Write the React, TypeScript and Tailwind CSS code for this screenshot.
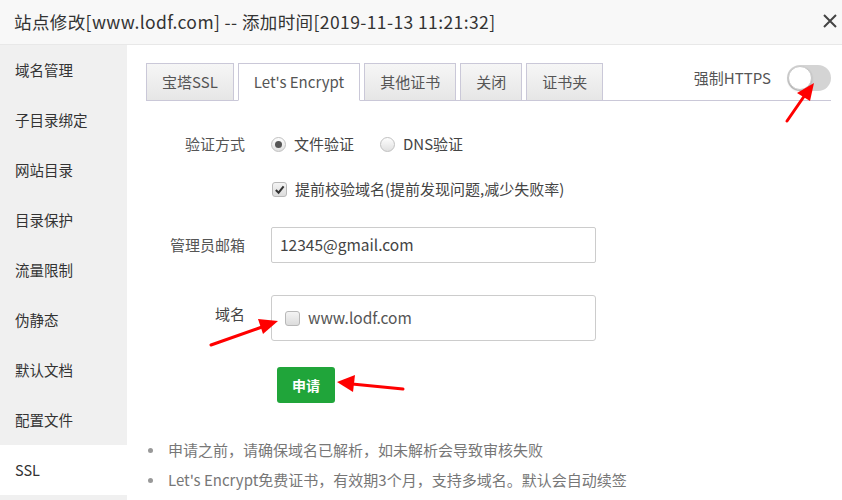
import React from "react";

const menu = [
  "域名管理",
  "子目录绑定",
  "网站目录",
  "目录保护",
  "流量限制",
  "伪静态",
  "默认文档",
  "配置文件",
  "SSL",
];

const tabs = ["宝塔SSL", "Let's Encrypt", "其他证书", "关闭", "证书夹"];

function Radio({ checked }: { checked?: boolean }) {
  return (
    <span className="flex h-[15px] w-[15px] items-center justify-center rounded-full border border-[#c0c0c0] bg-gradient-to-b from-[#fdfdfd] to-[#e0e0e0]">
      {checked && <span className="h-[7px] w-[7px] rounded-full bg-[#555]" />}
    </span>
  );
}

function Check({ checked }: { checked?: boolean }) {
  return (
    <span className="flex h-[15px] w-[15px] items-center justify-center rounded-[3px] border border-[#b8b8b8] bg-gradient-to-b from-[#f4f4f4] to-[#dcdcdc]">
      {checked && (
        <svg width="11" height="11" viewBox="0 0 12 12">
          <path d="M2 6.5 L5 9.5 L10.5 2.5" fill="none" stroke="#333" strokeWidth="2.2" />
        </svg>
      )}
    </span>
  );
}

export default function App() {
  return (
    <div className="relative h-[500px] w-[842px] overflow-hidden bg-white font-['Noto_Sans_CJK_SC','Noto_Sans',sans-serif] text-[15px] text-[#555]">
      <header className="flex h-[45px] items-center justify-between border-b border-[#e8e8e8] bg-[#f8f8f8] pl-[14px] pr-[4px]">
        <h1 className="text-[17.5px] tracking-[0.4px] text-[#333]">
          站点修改[www.lodf.com] -- 添加时间[2019-11-13 11:21:32]
        </h1>
        <svg width="16" height="16" viewBox="0 0 16 16" className="mt-[-2px]">
          <path d="M2 2 L14 14 M14 2 L2 14" stroke="#444" strokeWidth="2" />
        </svg>
      </header>

      <div className="flex h-[455px]">
        <aside className="flex w-[127px] flex-col bg-[#f0f0f0]">
          {menu.map((m) => (
            <div
              key={m}
              className={`flex h-[50px] shrink-0 items-center pl-[15px] text-[14.5px] text-[#333] ${
                m === "SSL" ? "bg-white" : ""
              }`}
            >
              {m}
            </div>
          ))}
        </aside>

        <main className="flex-1 pl-[19px] pr-[11px] pt-[18px]">
          <div className="flex h-[38px] items-end justify-between border-b border-[#cac8d8]">
            <div className="flex gap-[4px]">
              {tabs.map((t) => {
                const active = t === "Let's Encrypt";
                return (
                  <div
                    key={t}
                    className={`-mb-px flex h-[38px] items-center border border-[#cac8d8] px-[15px] text-[#555] ${
                      active
                        ? "border-b-white bg-white"
                        : "bg-gradient-to-b from-[#f6f6f6] to-[#e6e6e6]"
                    }`}
                  >
                    {t}
                  </div>
                );
              })}
            </div>
            <div className="mb-[9px] flex items-center">
              <span className="mr-[16px] text-[#555]">强制HTTPS</span>
              <span className="flex h-[26px] w-[44px] items-center rounded-full bg-[#d4d4d4] pl-[1px]">
                <span className="h-[24px] w-[24px] rounded-full border border-[#c8c8c8] bg-white shadow-[0_1px_2px_rgba(0,0,0,0.2)]" />
              </span>
            </div>
          </div>

          <div className="mt-[32px] flex h-[22px] items-center">
            <span className="w-[99px] text-right">验证方式</span>
            <span className="ml-[26px] flex items-center">
              <Radio checked />
              <span className="ml-[8px] text-[#444]">文件验证</span>
            </span>
            <span className="ml-[26px] flex items-center">
              <Radio />
              <span className="ml-[8px] text-[#444]">DNS验证</span>
            </span>
          </div>

          <div className="mt-[23px] flex h-[22px] items-center pl-[126px]">
            <Check checked />
            <span className="ml-[8px] text-[#444]">提前校验域名(提前发现问题,减少失败率)</span>
          </div>

          <div className="mt-[27px] flex items-center">
            <span className="w-[99px] text-right">管理员邮箱</span>
            <div className="ml-[26px] flex h-[36px] w-[325px] items-center rounded-[2px] border border-[#ccc] pl-[8px] text-[15.5px] text-[#444]">
              12345@gmail.com
            </div>
          </div>

          <div className="mt-[32px] flex items-start">
            <span className="mt-[8px] w-[99px] text-right text-[#444]">域名</span>
            <div className="ml-[26px] flex h-[46px] w-[325px] items-center rounded-[3px] border border-[#ccc] pl-[13px]">
              <Check />
              <span className="ml-[8px] text-[15.5px] text-[#555]">www.lodf.com</span>
            </div>
          </div>

          <div className="mt-[26px] pl-[131px]">
            <button className="h-[36px] w-[58px] rounded-[3px] bg-[#20a53a] text-[14px] font-bold text-white">
              申请
            </button>
          </div>

          <ul className="mt-[37px] flex flex-col gap-[10px] pl-[2px] text-[#777]">
            <li className="flex h-[20px] items-center">
              <span className="mr-[15px] h-[5px] w-[5px] rounded-full bg-[#999]" />
              申请之前，请确保域名已解析，如未解析会导致审核失败
            </li>
            <li className="flex h-[20px] items-center">
              <span className="mr-[15px] h-[5px] w-[5px] rounded-full bg-[#999]" />
              Let's Encrypt免费证书，有效期3个月，支持多域名。默认会自动续签
            </li>
          </ul>
        </main>
      </div>

      <svg className="pointer-events-none absolute inset-0" width="842" height="500" viewBox="0 0 842 500">
        <g stroke="#f00" strokeWidth="3" fill="#f00" strokeLinecap="round">
          <line x1="787" y1="121" x2="805" y2="95" />
          <polygon points="814,83 797,93 810,101" stroke="none" />
          <line x1="211" y1="345" x2="262" y2="327" />
          <polygon points="278,321 258,319 263,334" stroke="none" />
          <line x1="403" y1="389" x2="352" y2="384" />
          <polygon points="337,382 355,375 353,392" stroke="none" />
        </g>
      </svg>
    </div>
  );
}
